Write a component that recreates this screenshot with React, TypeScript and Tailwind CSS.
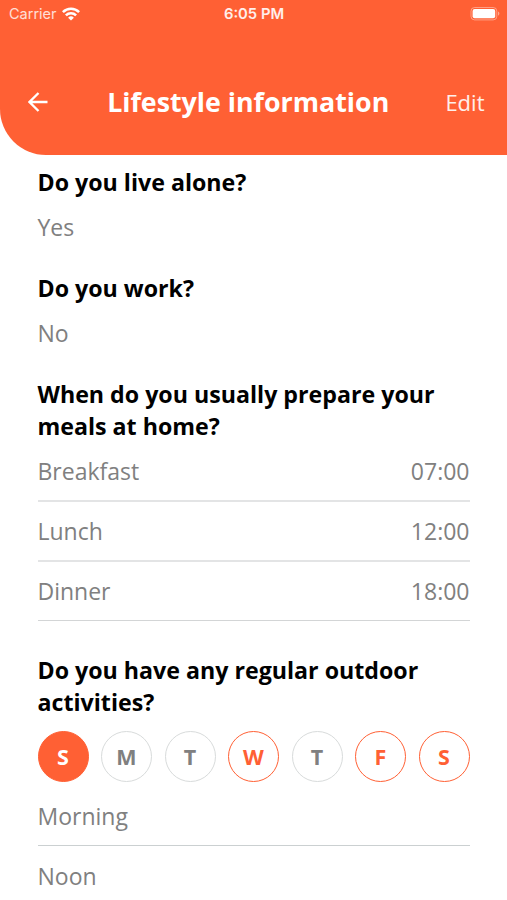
import clsx from "clsx";

const ANSWERS = [
  { question: "Do you live alone?", answer: "Yes" },
  { question: "Do you work?", answer: "No" },
];

const MEALS = [
  { label: "Breakfast", time: "07:00" },
  { label: "Lunch", time: "12:00" },
  { label: "Dinner", time: "18:00" },
];

const DAYS = [
  { letter: "S", state: "selected" },
  { letter: "M", state: "off" },
  { letter: "T", state: "off" },
  { letter: "W", state: "active" },
  { letter: "T", state: "off" },
  { letter: "F", state: "active" },
  { letter: "S", state: "active" },
];

const DAY_STYLE: Record<string, string> = {
  selected: "border-[#ff6034] bg-[#ff6034] text-white",
  active: "border-[#ff6034] text-[#ff6034]",
  off: "border-[#d8dbdb] text-[#808080]",
};

function WifiIcon() {
  return (
    <svg width="18" height="14" viewBox="0 0 18 14" fill="none" stroke="currentColor" strokeWidth="2.6">
      <path d="M.9 5.1C5.5.6 12.5.6 17.1 5.1" />
      <path d="M3.9 8.4C6.8 5.6 11.2 5.6 14.1 8.4" />
      <path d="M9 13.6 6.1 10.7a4.1 4.1 0 0 1 5.8 0Z" fill="currentColor" stroke="none" />
    </svg>
  );
}

function BatteryIcon() {
  return (
    <svg width="30" height="14" viewBox="0 0 30 14" fill="none">
      <rect x="1" y="0.5" width="25.8" height="12.4" rx="3.6" stroke="white" strokeOpacity="0.4" />
      <rect x="2.6" y="2.1" width="22.6" height="9.2" rx="2" fill="white" />
      <path d="M28 4.6c1.9.7 1.9 3.5 0 4.2Z" fill="white" fillOpacity="0.45" />
    </svg>
  );
}

function StatusBar() {
  return (
    <div className="flex h-[27px] items-center justify-between pl-[9px] pr-[7px] font-[Inter,sans-serif] text-white">
      <div className="flex flex-1 items-center gap-[5.5px]">
        <span className="text-[14.5px] text-white/80">Carrier</span>
        <WifiIcon />
      </div>
      <span className="pt-[2px] pr-px text-[14.8px] font-semibold text-white/90">6:05 PM</span>
      <div className="flex flex-1 justify-end">
        <BatteryIcon />
      </div>
    </div>
  );
}

function Header() {
  return (
    <header className="h-[154.5px] rounded-bl-[46px] bg-[#ff6034]">
      <StatusBar />
      <div className="mt-[55px] flex h-10 items-center justify-between pl-[28px] pr-[22.5px] text-white">
        <button type="button" aria-label="Back">
          <svg width="20" height="20" viewBox="0 0 20 20" fill="none" stroke="currentColor" strokeWidth="2.3">
            <path d="M19.5 10H1.5M10.5 1 1.5 10l9 9" />
          </svg>
        </button>
        <h1 className="pt-px pl-[3px] text-[26.8px] font-bold">Lifestyle information</h1>
        <button type="button" className="text-[22px] text-white/90">
          Edit
        </button>
      </div>
    </header>
  );
}

function Question({ children }: { children: string }) {
  return <h2 className="text-[23.2px] leading-[31.7px] font-bold text-black">{children}</h2>;
}

function Row({ label, value, className }: { label: string; value?: string; className: string }) {
  return (
    <div className={clsx("flex items-center justify-between", className)}>
      <span>{label}</span>
      <span>{value}</span>
    </div>
  );
}

export default function App() {
  return (
    <div className="h-[900px] w-[507px] overflow-hidden bg-white font-['Open_Sans',sans-serif]">
      <Header />
      <main className="px-[37.5px] pt-[12px] text-[23px] text-[#808080]">
        {ANSWERS.map((a) => (
          <section key={a.question} className="h-[106.2px]">
            <Question>{a.question}</Question>
            <p className="mt-[13px] leading-8">{a.answer}</p>
          </section>
        ))}

        <section>
          <Question>When do you usually prepare your meals at home?</Question>
          {MEALS.map((m) => (
            <Row
              key={m.label}
              label={m.label}
              value={m.time}
              className="h-[60px] border-b-2 border-[#e3e4e5] last:h-[59px] last:border-b last:border-[#d3d5d6]"
            />
          ))}
        </section>

        <section className="mt-[34px]">
          <Question>Do you have any regular outdoor activities?</Question>
          <div className="mt-3 mb-1 flex justify-between">
            {DAYS.map((d, i) => (
              <span
                key={i}
                className={clsx(
                  "flex size-[51px] items-center justify-center rounded-full border-[1.5px] pt-px text-[21.5px] leading-none font-bold",
                  DAY_STYLE[d.state],
                )}
              >
                {d.letter}
              </span>
            ))}
          </div>
          <Row label="Morning" className="h-[60px] border-b border-[#cbd0d1] pt-[3px]" />
          <Row label="Noon" className="h-[60px] border-b border-[#cbd0d1] pt-[3px]" />
        </section>
      </main>
    </div>
  );
}
